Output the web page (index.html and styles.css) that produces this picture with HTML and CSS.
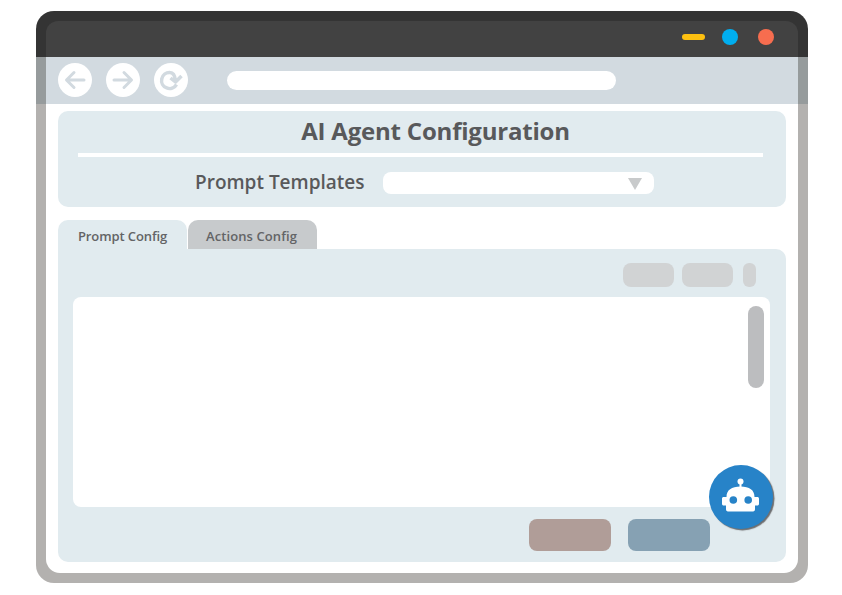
FILE: index.html
```html
<!DOCTYPE html>
<html lang="en">
<head>
<meta charset="utf-8">
<title>AI Agent Configuration</title>
<link rel="stylesheet" href="styles.css">
</head>
<body>
<div class="window">
  <div class="chrome-top">
    <div class="titlebar">
      <span class="win-min"></span>
      <span class="win-dot win-blue"></span>
      <span class="win-dot win-red"></span>
    </div>
  </div>
  <div class="chrome-mid">
    <div class="toolbar">
      <span class="nav-btn">
        <svg viewBox="0 0 34 34" width="34" height="34"><path class="nav-icon" d="M26 17H9M16 9.500L8.500 17L16 24.500"/></svg>
      </span>
      <span class="nav-btn">
        <svg viewBox="0 0 34 34" width="34" height="34"><path class="nav-icon" d="M8 17H25M18 9.500L25.500 17L18 24.500"/></svg>
      </span>
      <span class="nav-btn">
        <svg viewBox="0 0 34 34" width="34" height="34"><path class="nav-icon nav-icon-thick" d="M22.500 21.500A8 8 0 1 1 16 9.500C19 9.500 21 13 21.500 18M16.500 15L21.500 19L27.500 13"/></svg>
      </span>
      <span class="address"></span>
    </div>
  </div>
  <div class="chrome-bottom">
    <div class="page">
      <section class="config-head">
        <h1 class="title">AI Agent Configuration</h1>
        <div class="divider"></div>
        <div class="template-row">
          <span class="template-label">Prompt Templates</span>
          <span class="select"><span class="select-arrow"></span></span>
        </div>
      </section>
      <div class="tabs">
        <span class="tab tab-active">Prompt Config</span>
        <span class="tab tab-idle">Actions Config</span>
      </div>
      <section class="tab-panel">
        <div class="tools">
          <span class="tool"></span>
          <span class="tool"></span>
          <span class="tool tool-small"></span>
        </div>
        <div class="editor"><span class="scrollbar"></span></div>
        <div class="actions">
          <span class="action action-cancel"></span>
          <span class="action action-save"></span>
        </div>
        <div class="fab">
          <svg viewBox="0 0 40 34" width="40" height="34">
            <circle class="bot" cx="19.500" cy="3.500" r="3"/>
            <rect class="bot" x="18.500" y="4" width="2" height="6"/>
            <path class="bot" d="M5.500 19C5.500 12 10.500 8.500 19.500 8.500S33.500 12 33.500 19H36C37.500 19 38 19.500 38 21V25.500C38 27 37.500 27.500 36 27.500H34V31C34 32.500 33.500 33.500 32 33.500H7C5.500 33.500 5 32.500 5 31V27.500H3C1.500 27.500 1 27 1 25.500V21C1 19.500 1.500 19 3 19Z"/>
            <circle class="bot-eye" cx="12.300" cy="22" r="3.800"/>
            <circle class="bot-eye" cx="27.200" cy="22" r="3.800"/>
          </svg>
        </div>
      </section>
    </div>
  </div>
</div>
</body>
</html>
```
FILE: styles.css
```css
* { box-sizing: border-box; }
html, body { margin: 0; padding: 0; background: #fff; }
body {
  width: 842px;
  height: 595px;
  padding: 11px 34px 12px 36px;
  font-family: "Open Sans", "Noto Sans", sans-serif;
  color: #58595b;
  overflow: hidden;
}
.window { width: 772px; height: 572px; display: flex; flex-direction: column; }

.chrome-top {
  background: #343434;
  padding: 10px 10px 0;
  border-radius: 18px 18px 0 0;
}
.titlebar {
  height: 36px;
  background: #424242;
  border-radius: 12px 12px 0 0;
  display: flex;
  align-items: center;
  padding: 0 24px 4px 0;
  justify-content: flex-end;
}
.win-min { width: 23px; height: 6px; border-radius: 3px; background: #fdc010; margin-right: 17px; }
.win-dot { width: 16px; height: 16px; border-radius: 50%; }
.win-blue { background: #00aeef; margin-right: 20px; }
.win-red { background: #f76d4f; }

.chrome-mid { background: #969b9c; padding: 0 10px; }
.toolbar {
  height: 47px;
  background: #d2dae0;
  display: flex;
  align-items: flex-start;
  padding: 6px 0 0 12px;
}
.nav-btn {
  width: 34px;
  height: 34px;
  border-radius: 50%;
  background: #fff;
  margin-right: 14px;
  display: block;
}
.nav-btn svg { display: block; }
.nav-icon { fill: none; stroke: #d2dae0; stroke-width: 3; stroke-linecap: round; stroke-linejoin: round; }
.nav-icon-thick { stroke-width: 3.500; stroke-linecap: butt; }
.address {
  width: 389px;
  height: 19px;
  margin: 8px 0 0 25px;
  background: #fff;
  border-radius: 10px;
}

.chrome-bottom {
  flex: 1;
  background: #b3b1af;
  padding: 0 10px 10px;
  border-radius: 0 0 18px 18px;
  display: flex;
}
.page {
  flex: 1;
  background: #fff;
  border-radius: 0 0 14px 14px;
  padding: 7px 12px 11px;
  display: flex;
  flex-direction: column;
}

.config-head {
  height: 96px;
  background: #e1ebef;
  border-radius: 10px;
  padding: 5px 23px 0 20px;
}
.title {
  margin: 0;
  height: 30px;
  padding-left: 30px;
  line-height: 30px;
  font-size: 24px;
  font-weight: 700;
  text-align: center;
  letter-spacing: -0.200px;
}
.divider { height: 4px; margin-top: 7px; background: #fff; }
.template-row {
  display: flex;
  align-items: center;
  margin-top: 15px;
  padding-left: 117px;
}
.template-label {
  width: 188px;
  height: 22px;
  font-size: 19px;
  font-weight: 600;
  line-height: 20px;
}
.select {
  width: 271px;
  height: 22px;
  background: #fff;
  border-radius: 8px;
  display: flex;
  align-items: center;
  justify-content: flex-end;
  padding-right: 12px;
}
.select-arrow {
  width: 0;
  height: 0;
  margin-top: 2px;
  border-left: 7px solid transparent;
  border-right: 7px solid transparent;
  border-top: 12px solid #c8cacb;
}

.tabs { display: flex; gap: 1px; margin-top: 13px; height: 29px; }
.tab {
  width: 129px;
  border-radius: 10px 10px 0 0;
  font-size: 13px;
  font-weight: 600;
  line-height: 33px;
  text-align: center;
  letter-spacing: -0.100px;
  color: #636466;
}
.tab-active { background: #e1ebef; }
.tab-idle { background: #c7cacc; padding-right: 2px; letter-spacing: 0.100px; }

.tab-panel {
  position: relative;
  flex: 1;
  background: #e1ebef;
  border-radius: 0 10px 10px 10px;
  padding: 14px 16px 11px 15px;
  display: flex;
  flex-direction: column;
}
.tools { display: flex; justify-content: flex-end; height: 24px; padding-right: 14px; }
.tool { width: 51px; height: 24px; border-radius: 8px; background: #d1d3d4; margin-left: 8px; }
.tool-small { width: 13px; margin-left: 10px; border-radius: 6px; }
.editor {
  height: 210px;
  margin-top: 10px;
  background: #fff;
  border-radius: 8px;
  display: flex;
  justify-content: flex-end;
  padding: 9px 6px 0 0;
}
.scrollbar { width: 16px; height: 82px; border-radius: 8px; background: #bcbdbf; }
.actions { display: flex; justify-content: flex-end; margin-top: 12px; padding-right: 60px; }
.action { width: 82px; height: 32px; border-radius: 8px; }
.action-cancel { background: #b09d98; margin-right: 17px; }
.action-save { background: #86a1b3; }

.fab {
  position: absolute;
  left: 651px;
  top: 216px;
  width: 64px;
  height: 64px;
  border-radius: 50%;
  background: #2783c8;
  box-shadow: 1.500px 1.500px 1px #6d6e70;
  display: flex;
  align-items: center;
  justify-content: center;
}
.fab svg { display: block; margin-top: -5px; }
.bot { fill: #fff; }
.bot-eye { fill: #2783c8; }
```
